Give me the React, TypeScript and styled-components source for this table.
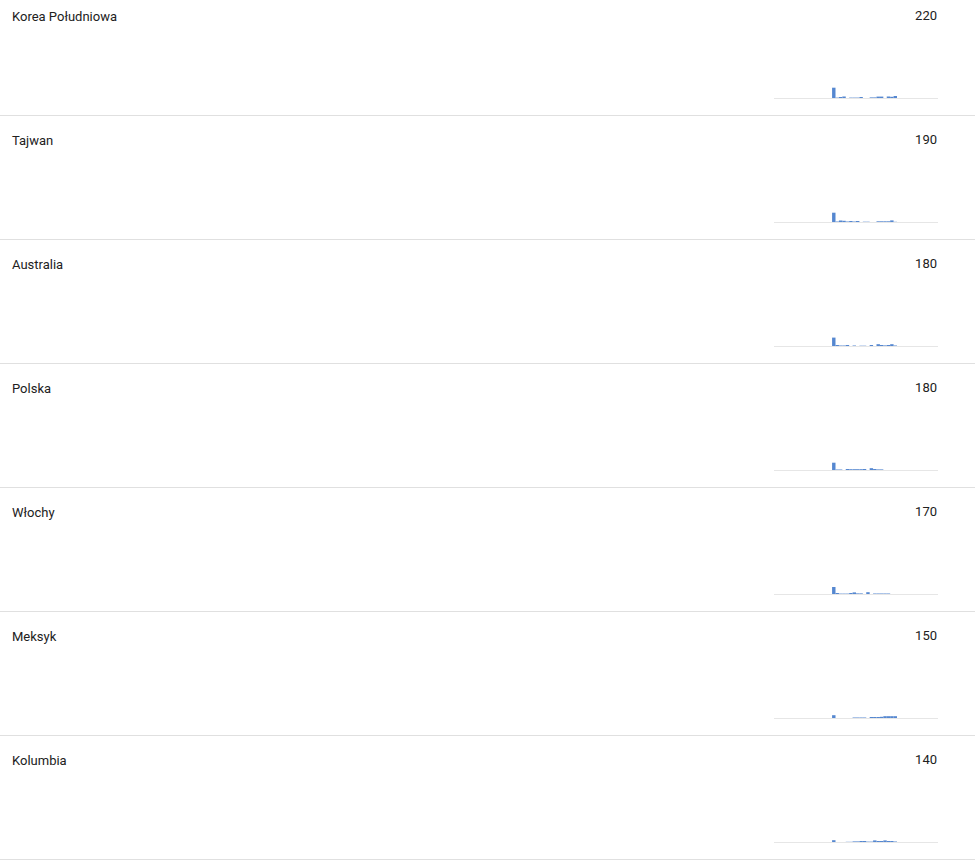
import styled, { createGlobalStyle } from "styled-components";

const GlobalStyle = createGlobalStyle`
  html, body {
    margin: 0;
    padding: 0;
    background: #ffffff;
  }
  * {
    box-sizing: border-box;
  }
`;

type Country = {
  name: string;
  value: number;
  bars: number[];
};

// heights in px for the 19 slots that hold data (slots 17..35 of 48)
const countries: Country[] = [
  {
    name: "Korea Południowa",
    value: 220,
    bars: [10.3, 0.4, 1, 1.5, 0, 0.4, 0.4, 0.4, 1, 0, 0, 0.6, 0.6, 1.4, 1.4, 0, 1.5, 1.2, 2],
  },
  {
    name: "Tajwan",
    value: 190,
    bars: [9.3, 0.5, 1.5, 1.2, 0.5, 1, 0.5, 1, 0, 0.3, 0.3, 0, 0, 0.7, 0.7, 0.7, 0.7, 1.6, 0.2],
  },
  {
    name: "Australia",
    value: 180,
    bars: [8.4, 1, 0.5, 0.5, 1, 0, 0.5, 0, 0.3, 0.3, 0, 1, 0, 1.8, 1, 0.6, 1, 1.8, 0.5],
  },
  {
    name: "Polska",
    value: 180,
    bars: [7.3, 0.5, 0.5, 0, 1, 0.8, 0.8, 0.8, 0.8, 1, 0, 1.8, 1, 0.6, 0.6, 0, 0, 0, 0],
  },
  {
    name: "Włochy",
    value: 170,
    bars: [7, 1, 0.4, 0.4, 0.4, 1, 1.6, 0.6, 0.6, 0, 1.8, 0, 0.5, 0.5, 0.5, 0.5, 0.5, 0, 0],
  },
  {
    name: "Meksyk",
    value: 150,
    bars: [2.8, 0, 0, 0, 0, 0, 0.5, 0.5, 0.5, 0.5, 0, 1, 1, 1, 1.2, 1.8, 1.8, 1.8, 1.8],
  },
  {
    name: "Kolumbia",
    value: 140,
    bars: [1.8, 0, 0, 0, 0.2, 0.2, 0.6, 0.6, 1, 1, 0.4, 0.4, 1.6, 1, 1, 1.6, 1, 1, 0.5],
  },
];

const CHART_W = 164;
const CHART_H = 14;
const SLOTS = 48;
const FIRST_SLOT = 17;

const List = styled.div`
  margin-top: -8px;
  font-family: Roboto, "Noto Sans", Arial, sans-serif;
  color: #212121;
`;

const Row = styled.div`
  display: grid;
  grid-template-columns: 1fr ${CHART_W}px;
  height: 124px;
  padding: 15px 37px 16px 12px;
  border-bottom: 1px solid #e0e0e0;
`;

const Label = styled.div`
  font-size: 13px;
  line-height: 20px;
`;

const Side = styled.div`
  display: flex;
  flex-direction: column;
  justify-content: space-between;
`;

const Value = styled.div`
  font-size: 13px;
  line-height: 20px;
  text-align: right;
  padding-right: 1px;
  margin-top: -1px;
`;

const Chart = styled.svg`
  display: block;
`;

function Sparkline({ bars }: { bars: number[] }) {
  const slotW = CHART_W / SLOTS;
  return (
    <Chart width={CHART_W} height={CHART_H} viewBox={`0 0 ${CHART_W} ${CHART_H}`}>
      <rect x={0} y={CHART_H - 1} width={CHART_W} height={1} fill="#e6e6e6" />
      {bars.map((h, i) =>
        h > 0 ? (
          <rect
            key={i}
            x={(FIRST_SLOT + i) * slotW}
            y={CHART_H - 1 - h}
            width={slotW}
            height={h}
            fill="#5587d0"
          />
        ) : null
      )}
    </Chart>
  );
}

export default function App() {
  return (
    <>
      <GlobalStyle />
      <List>
        {countries.map((c) => (
          <Row key={c.name}>
            <Label>{c.name}</Label>
            <Side>
              <Value>{c.value}</Value>
              <Sparkline bars={c.bars} />
            </Side>
          </Row>
        ))}
      </List>
    </>
  );
}
